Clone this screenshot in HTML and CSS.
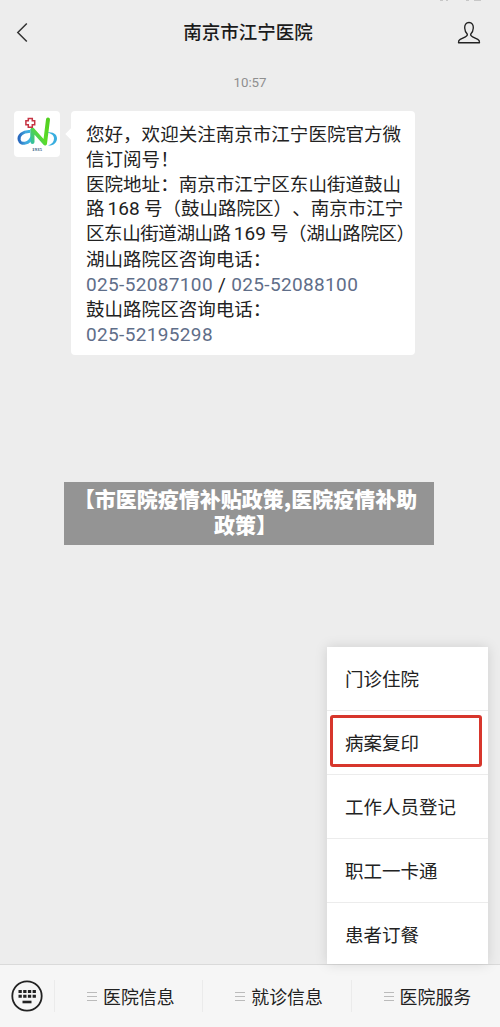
FILE: index.html
```html
<!DOCTYPE html>
<html lang="zh-CN">
<head>
<meta charset="utf-8">
<title>南京市江宁医院</title>
<link rel="stylesheet" href="styles.css">
</head>
<body>
<div class="screen">
  <header class="header">
    <svg class="back" width="14" height="22" viewBox="0 0 14 22"><path d="M11.800 1.500 2.800 10.500l9 9" fill="none" stroke="#333" stroke-width="1.500"/></svg>
    <h1 class="title">南京市江宁医院</h1>
    <svg class="person" width="24" height="24" viewBox="0 0 24 24"><path d="M12 1.500C9 1.500 7.500 4 7.700 7c.1 2.500 1 4.500 2.500 6 .5 1.300-.2 2-1.800 2.800L3.200 18.400C1.800 19.200 1.400 20.200 1.500 21.700h21c.1-1.500-.3-2.500-1.700-3.300l-5.200-2.600c-1.600-.8-2.300-1.500-1.800-2.800 1.500-1.500 2.400-3.500 2.500-6C16.500 4 15 1.500 12 1.500Z" fill="none" stroke="#222" stroke-width="1.350" stroke-linejoin="round"/></svg>
    <svg class="sliver" width="48" height="2" viewBox="0 0 48 2"><path d="M6 0h3M12 0h2M32 0h3M40 0h7" stroke="#bbb" stroke-width="1.500"/></svg>
  </header>
  <main class="chat">
    <time class="time">10:57</time>
    <div class="message">
      <div class="avatar">
        <svg width="46" height="46" viewBox="0 0 46 46">
          <defs>
            <linearGradient id="blue" x1="0" x2="1"><stop offset="0" stop-color="#2868be"/><stop offset=".5" stop-color="#42a7df"/><stop offset="1" stop-color="#39b7e2"/></linearGradient>
            <linearGradient id="green" x1="0" x2="1" y1="1" y2="0"><stop offset="0" stop-color="#35bfa0"/><stop offset=".45" stop-color="#5bdc28"/><stop offset="1" stop-color="#52cf20"/></linearGradient>
          </defs>
          <path d="M16 20.500C9 20 4 24.500 5.200 29c1.300 5.500 10.500 4 12.800-3.500V18" fill="none" stroke="url(#blue)" stroke-width="3"/>
          <path d="M33 21.500c7-1 10 2.500 10 6 0 4.500-4 7.500-9 7 4-1.500 6-3.500 6-7s-3-5-7-6Z" fill="#3aaedf"/>
          <path d="M18.500 31V18.500L31 32.500 34 8.500" fill="none" stroke="url(#green)" stroke-width="4" stroke-linecap="round" stroke-linejoin="round"/>
          <path d="M14.300 7.500h4v2.300h2.400v4h-2.400v2.400h-4v-2.400h-2.400v-4h2.400Z" fill="#fff" stroke="#c63443" stroke-width="1.500"/>
          <text class="founded" x="18" y="39.500">1935</text>
        </svg>
      </div>
      <div class="bubble">
        <p>您好，欢迎关注南京市江宁医院官方微</p>
        <p>信订阅号！</p>
        <p>医院地址：南京市江宁区东山街道鼓山</p>
        <p class="mixed">路<span class="num">168</span>号（鼓山路院区）、南京市江宁</p>
        <p class="mixed tight">区东山街道湖山路<span class="num">169</span>号（湖山路院区）</p>
        <p>湖山路院区咨询电话：</p>
        <p class="latin"><a>025-52087100</a> / <a>025-52088100</a></p>
        <p>鼓山路院区咨询电话：</p>
        <p class="latin"><a>025-52195298</a></p>
      </div>
    </div>
  </main>
  <div class="banner">【市医院疫情补贴政策,医院疫情补助<br>政策】</div>
  <nav class="menu">
    <div class="item">门诊住院</div>
    <div class="item marked">病案复印</div>
    <div class="item">工作人员登记</div>
    <div class="item">职工一卡通</div>
    <div class="item">患者订餐</div>
  </nav>
  <footer class="toolbar">
    <div class="keyboard">
      <svg width="32" height="32" viewBox="0 0 32 32"><circle cx="16" cy="16" r="14.700" fill="none" stroke="#222" stroke-width="1.800"/><path d="M7.500 11.400h17.500M7.500 16.200h17.500" stroke="#222" stroke-width="3" stroke-dasharray="3.300 1.400"/><path d="M11.500 22h9" stroke="#222" stroke-width="2.600"/></svg>
    </div>
    <div class="tab"><i class="lines"></i>医院信息</div>
    <div class="tab"><i class="lines"></i>就诊信息</div>
    <div class="tab"><i class="lines"></i>医院服务</div>
  </footer>
</div>
</body>
</html>
```
FILE: styles.css
```css
*, *::before, *::after { box-sizing: border-box; }
body {
  margin: 0;
  background: #ededed;
  color: #222;
  font-family: Roboto, "Noto Sans CJK SC", sans-serif;
  text-spacing-trim: space-all;
}
.screen {
  position: relative;
  display: flex;
  flex-direction: column;
  height: 1027px;
  overflow: hidden;
}
.header {
  position: relative;
  display: flex;
  justify-content: space-between;
  align-items: center;
  height: 65px;
  padding: 0 19px 0 15px;
}
.title {
  margin: 0 0 0 10px;
  font-size: 18.500px;
  font-weight: 500;
  line-height: 26px;
  color: #1b1b1b;
}
.sliver { position: absolute; top: 0; right: 18px; }
.chat { flex: 1; }
.time {
  display: block;
  margin-top: 9px;
  text-align: center;
  font-size: 13.300px;
  line-height: 18px;
  color: #8f8f8f;
}
.message { display: flex; align-items: flex-start; padding: 19px 0 0 14px; }
.avatar {
  width: 46px;
  height: 46px;
  border-radius: 4px;
  background: #fff;
  overflow: hidden;
}
.avatar svg { display: block; }
.founded {
  font: bold 5px "Liberation Serif", serif;
  fill: #345d80;
}
.bubble {
  position: relative;
  width: 344px;
  height: 244px;
  margin-left: 11px;
  padding: 11px 0 0 15px;
  border-radius: 4px;
  background: #fff;
  font-size: 18.550px;
  line-height: 27px;
  white-space: nowrap;
}
.bubble::before {
  content: "";
  position: absolute;
  left: -4px;
  top: 19px;
  width: 8px;
  height: 8px;
  background: #fff;
  transform: rotate(45deg);
}
.bubble p { margin: 0; height: 25px; }
.num { margin: 0 4px 0 3px; font-size: 19px; line-height: 20px; letter-spacing: .1px; }
.bubble .mixed { line-height: 25px; }
.tight { letter-spacing: -.45px; }
.latin { font-size: 19px; line-height: 25px; letter-spacing: .35px; }
.bubble a { color: #5f6e89; }
.banner {
  position: absolute;
  left: 64px;
  top: 482px;
  width: 370px;
  height: 63px;
  padding: 3px 7px 0 0;
  background: #949494;
  color: #fff;
  font: 900 21px/26px "Noto Sans CJK SC", sans-serif;
  text-align: center;
  white-space: nowrap;
}
.menu {
  position: absolute;
  left: 327px;
  top: 647px;
  z-index: 1;
  width: 161px;
  height: 317px;
  background: #fff;
  box-shadow: 0 0 12px rgba(0, 0, 0, .13);
}
.item {
  position: relative;
  height: 64px;
  padding-left: 18px;
  border-bottom: 1px solid #ececec;
  font-size: 18.500px;
  line-height: 67px;
}
.item:last-child { height: 61px; border: 0; }
.marked::after {
  content: "";
  position: absolute;
  left: 3px;
  top: 4px;
  width: 152px;
  height: 52px;
  border: 3px solid #d7362c;
  border-radius: 3px;
}
.toolbar {
  display: flex;
  align-items: center;
  height: 63px;
  border-top: 1px solid #dadada;
  background: #f6f6f6;
}
.keyboard { width: 54px; padding-left: 11px; }
.keyboard svg { display: block; }
.tab {
  display: flex;
  align-items: center;
  width: 148.300px;
  height: 32px;
  padding-left: 32px;
  border-left: 1px solid #ebebeb;
  font-size: 17.900px;
}
.lines {
  width: 10px;
  height: 9px;
  margin-right: 6px;
  border: solid #bbb;
  border-width: 1px 0;
  background: linear-gradient(#bbb, #bbb) center / 100% 1px no-repeat;
}
```
